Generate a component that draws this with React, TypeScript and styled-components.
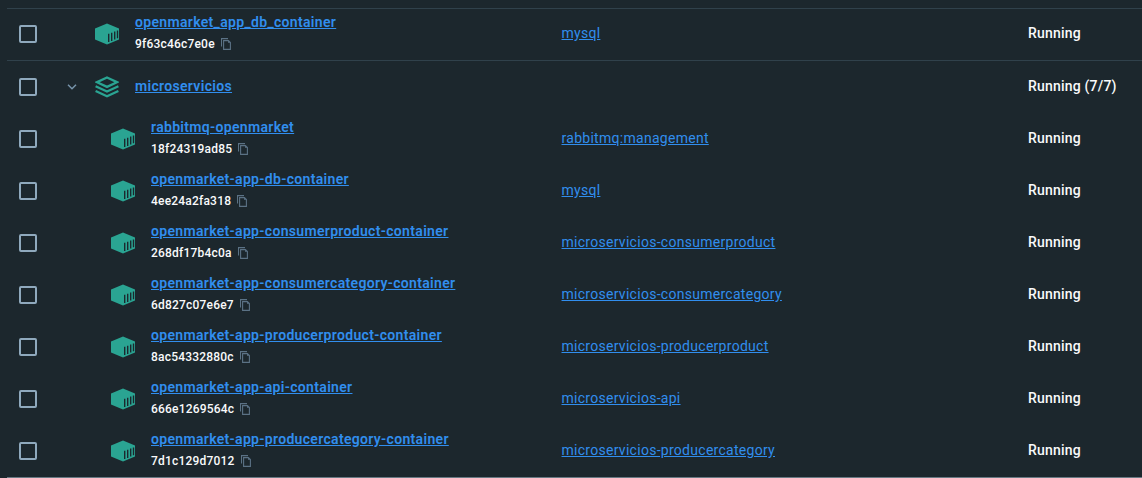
import React from "react";
import styled, { createGlobalStyle } from "styled-components";

const GlobalStyle = createGlobalStyle`
  *, *::before, *::after { box-sizing: border-box; }
  body {
    margin: 0;
    background: #1c272d;
    font-family: Roboto, "Liberation Sans", sans-serif;
    color: #f9fafb;
    overflow: hidden;
  }
`;

const Table = styled.main`
  height: 478px;
  padding: 8px 0 0 7px;
`;

const Row = styled.div<{ $divider?: boolean }>`
  display: grid;
  grid-template-columns: 53px 27px 474.5px 466.5px 1fr;
  align-items: center;
  height: 52px;
  padding-bottom: ${(p) => (p.$divider ? 1 : 0)}px;
  border-bottom: ${(p) => (p.$divider ? "1px solid #30414b" : "0")};
`;

const TopRule = styled.div`
  height: 1px;
  background: #30414b;
`;

const BottomRule = styled.div`
  height: 1px;
  background: #677983;
`;

const Checkbox = styled.button`
  width: 18px;
  height: 18px;
  margin: 0 0 0 12px;
  padding: 0;
  border: 2px solid #8fa9bd;
  border-radius: 2px;
  background: transparent;
`;

const Toggle = styled.button`
  display: flex;
  width: 24px;
  height: 24px;
  padding: 0;
  border: 0;
  background: transparent;
  align-items: center;
  justify-content: center;
`;

const NameCell = styled.div<{ $nested?: boolean }>`
  display: flex;
  align-items: center;
  gap: 16px;
  padding-left: ${(p) => (p.$nested ? 24 : 8)}px;

  > svg { flex: none; }
`;

const Details = styled.div`
  display: flex;
  flex-direction: column;
  align-items: flex-start;
  padding-bottom: 2px;
`;

const NameLink = styled.a`
  color: #318eee;
  font-size: 14px;
  line-height: 22px;
  font-weight: 600;
  letter-spacing: 0.325px;
  text-decoration: underline;
  white-space: nowrap;
`;

const GroupLink = styled(NameLink)`
  padding-bottom: 2px;
`;

const HashLine = styled.div`
  display: flex;
  align-items: center;
  gap: 6px;
  height: 22px;
  font-size: 12px;
  line-height: 22px;
  font-weight: 500;
  letter-spacing: 0.2px;
`;

const ImageLink = styled.a`
  padding-bottom: 2px;
  color: #318eee;
  font-size: 14px;
  line-height: 20px;
  letter-spacing: 0.28px;
  text-decoration: underline;
`;

const Status = styled.span`
  padding-bottom: 2px;
  font-size: 14px;
  line-height: 20px;
  font-weight: 500;
  letter-spacing: 0.2px;
`;

const ContainerIcon = () => (
  <svg width="24" height="22" viewBox="0 0 24 22">
    <path d="M12 0.4 24 5.6V16.4L12 21.6 0 16.4V5.6Z" fill="#2aa492" />
    <path
      d="M13.7 10.8V19M16.7 9.8V17.9M19.7 8.6V16.6M22.5 7.6V15.2"
      stroke="#1c272d"
      strokeWidth="1.35"
      fill="none"
    />
  </svg>
);

const StackIcon = () => (
  <svg width="24" height="22" viewBox="0 0 24 22" fill="none" stroke="#2aa492" strokeWidth="2.3">
    <path d="M12 1.5 22 6.2 12 10.9 2 6.2Z" />
    <path d="M0.6 10.2 12 15.5 23.4 10.2M0.6 15 12 20.3 23.4 15" />
  </svg>
);

const ChevronIcon = () => (
  <svg width="10" height="6" viewBox="0 0 10 6" fill="none" stroke="#7794ab" strokeWidth="1.5">
    <path d="M1 0.8 5 4.8 9 0.8" />
  </svg>
);

const CopyIcon = () => (
  <svg width="10" height="12" viewBox="0 0 10 12" fill="none" stroke="#5b7285" strokeWidth="1.1">
    <path d="M0.5 8.5V0.6H7" />
    <path d="M2.6 2.6H7.4L9.4 4.4V11.4H2.6Z" />
    <path d="M7 2.4 9.6 4.8H7Z" fill="#5b7285" stroke="none" />
  </svg>
);

type Container = { name: string; hash: string; image: string };

const services: Container[] = [
  { name: "rabbitmq-openmarket", hash: "18f24319ad85", image: "rabbitmq:management" },
  { name: "openmarket-app-db-container", hash: "4ee24a2fa318", image: "mysql" },
  { name: "openmarket-app-consumerproduct-container", hash: "268df17b4c0a", image: "microservicios-consumerproduct" },
  { name: "openmarket-app-consumercategory-container", hash: "6d827c07e6e7", image: "microservicios-consumercategory" },
  { name: "openmarket-app-producerproduct-container", hash: "8ac54332880c", image: "microservicios-producerproduct" },
  { name: "openmarket-app-api-container", hash: "666e1269564c", image: "microservicios-api" },
  { name: "openmarket-app-producercategory-container", hash: "7d1c129d7012", image: "microservicios-producercategory" },
];

const ContainerRow = ({ item, nested, divider }: { item: Container; nested?: boolean; divider?: boolean }) => (
  <Row $divider={divider}>
    <Checkbox role="checkbox" aria-checked="false" aria-label={item.name} />
    <span />
    <NameCell $nested={nested}>
      <ContainerIcon />
      <Details>
        <NameLink>{item.name}</NameLink>
        <HashLine>
          {item.hash}
          <CopyIcon />
        </HashLine>
      </Details>
    </NameCell>
    <ImageLink>{item.image}</ImageLink>
    <Status>Running</Status>
  </Row>
);

export default function App() {
  return (
    <>
      <GlobalStyle />
      <Table>
        <TopRule />
        <ContainerRow
          divider
          item={{ name: "openmarket_app_db_container", hash: "9f63c46c7e0e", image: "mysql" }}
        />
        <Row>
          <Checkbox role="checkbox" aria-checked="false" aria-label="microservicios" />
          <Toggle aria-label="Collapse">
            <ChevronIcon />
          </Toggle>
          <NameCell>
            <StackIcon />
            <GroupLink>microservicios</GroupLink>
          </NameCell>
          <span />
          <Status>Running (7/7)</Status>
        </Row>
        {services.map((item) => (
          <ContainerRow key={item.hash} item={item} nested />
        ))}
        <BottomRule />
      </Table>
    </>
  );
}
